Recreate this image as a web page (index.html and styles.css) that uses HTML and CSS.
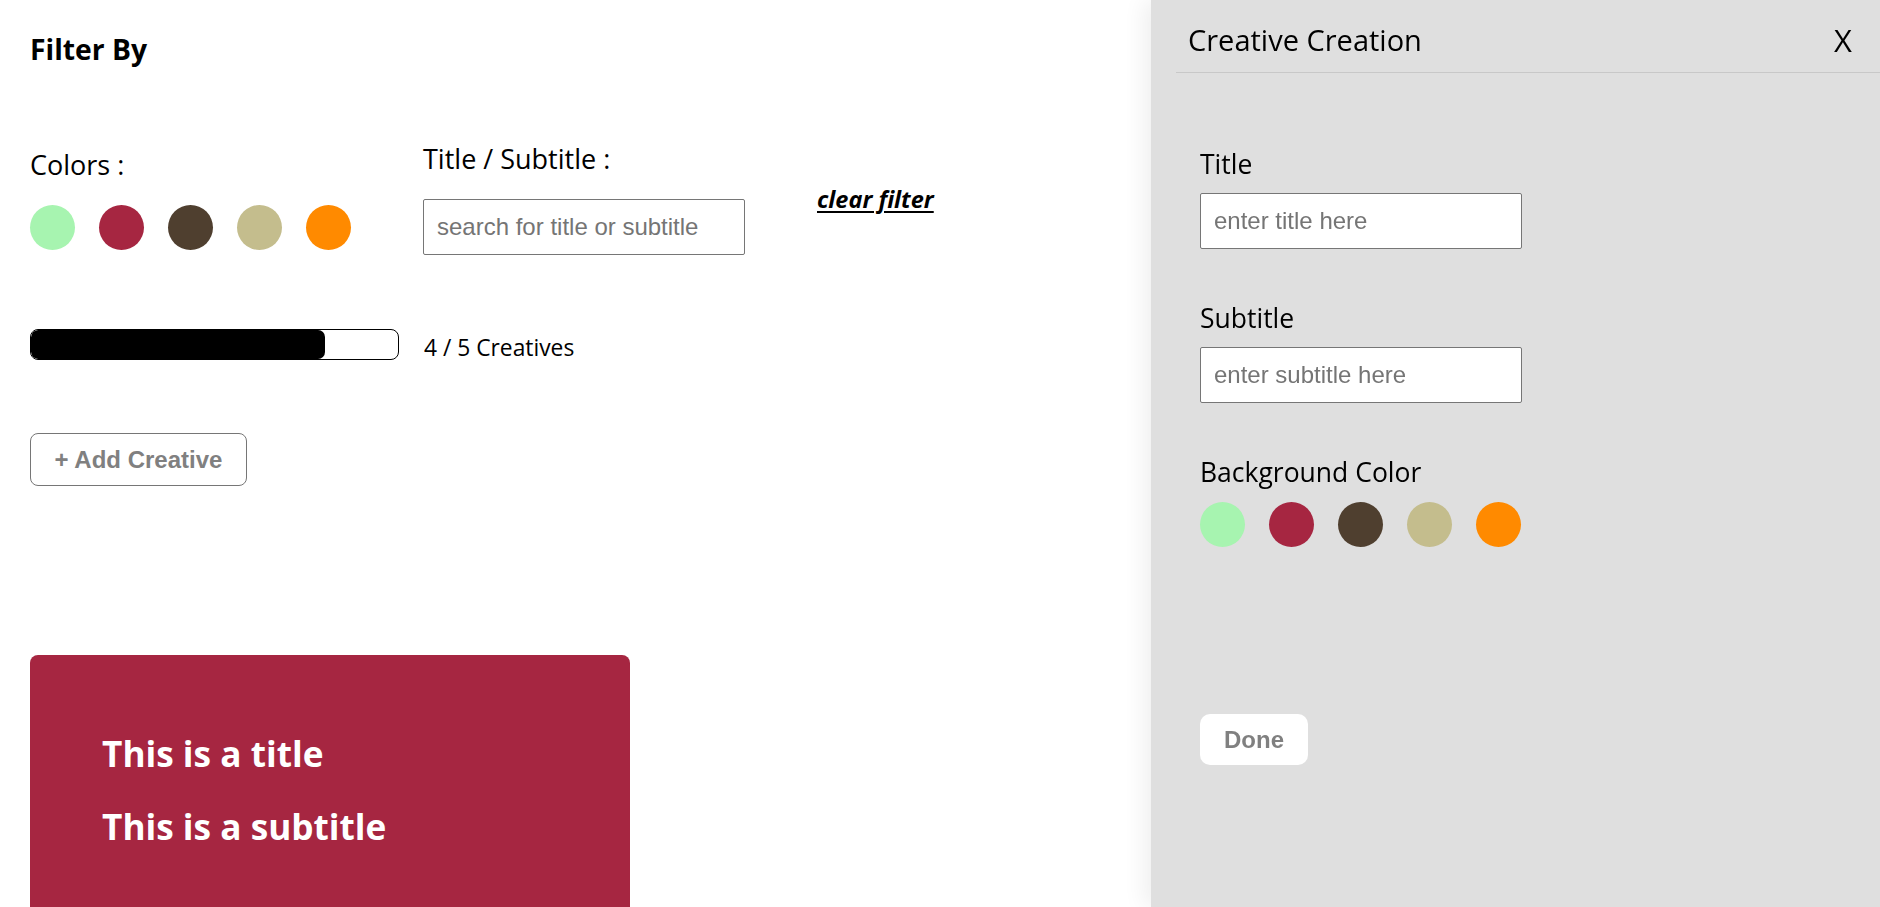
FILE: index.html
```html
<!DOCTYPE html>
<html lang="en">
<head>
<meta charset="utf-8">
<title>Creatives</title>
<link rel="stylesheet" href="styles.css">
</head>
<body>
<main class="page">
  <h2 class="filter-heading">Filter By</h2>
  <div class="filters">
    <div class="filter-colors">
      <div class="label">Colors :</div>
      <div class="swatches">
        <span class="swatch swatch-green"></span>
        <span class="swatch swatch-crimson"></span>
        <span class="swatch swatch-brown"></span>
        <span class="swatch swatch-khaki"></span>
        <span class="swatch swatch-orange"></span>
      </div>
    </div>
    <div class="filter-search">
      <div class="label">Title / Subtitle :</div>
      <input class="text-input search-input" type="text" placeholder="search for title or subtitle">
    </div>
    <a class="clear-filter" href="#">clear filter</a>
  </div>
  <div class="progress-row">
    <div class="progress"><div class="progress-fill" style="width:80%"></div></div>
    <span class="progress-text">4 / 5 Creatives</span>
  </div>
  <button class="add-btn" type="button">+ Add Creative</button>
  <div class="cards">
    <div class="card card-crimson">
      <div class="card-title">This is a title</div>
      <div class="card-subtitle">This is a subtitle</div>
    </div>
  </div>
</main>
<aside class="drawer">
  <div class="drawer-header">
    <span class="drawer-title">Creative Creation</span>
    <span class="drawer-close">X</span>
  </div>
  <div class="drawer-body">
    <div class="field">
      <div class="field-label">Title</div>
      <input class="text-input" type="text" placeholder="enter title here">
    </div>
    <div class="field">
      <div class="field-label">Subtitle</div>
      <input class="text-input" type="text" placeholder="enter subtitle here">
    </div>
    <div class="field field-colors">
      <div class="field-label">Background Color</div>
      <div class="swatches">
        <span class="swatch swatch-green"></span>
        <span class="swatch swatch-crimson"></span>
        <span class="swatch swatch-brown"></span>
        <span class="swatch swatch-khaki"></span>
        <span class="swatch swatch-orange"></span>
      </div>
    </div>
    <button class="done-btn" type="button">Done</button>
  </div>
</aside>
</body>
</html>
```
FILE: styles.css
```css
html, body {
  margin: 0;
  padding: 0;
  height: 100%;
  overflow: hidden;
  background: #ffffff;
  color: #000000;
  font-family: "Open Sans", "Noto Sans", sans-serif;
}

.page {
  padding: 0 0 0 30px;
}

.filter-heading {
  margin: 29px 0 0;
  font-size: 28.3px;
  line-height: 40px;
  font-weight: 700;
}

.filters {
  display: flex;
  align-items: flex-start;
  gap: 72px;
  margin-top: 72px;
}

.label {
  font-size: 27px;
  line-height: 36px;
  font-weight: 400;
}

.filter-colors {
  margin-top: 6px;
}

.swatches {
  display: flex;
  gap: 24px;
  margin-top: 22px;
}

.swatch {
  display: block;
  width: 45px;
  height: 45px;
  border-radius: 50%;
}

.swatch-green { background: #a7f4b0; }
.swatch-crimson { background: #a62641; }
.swatch-brown { background: #4f3f2f; }
.swatch-khaki { background: #c4bd8d; }
.swatch-orange { background: #ff8a00; }

.text-input {
  display: block;
  box-sizing: border-box;
  width: 322px;
  height: 56px;
  margin: 22px 0 0;
  padding: 0 13px;
  border: 1px solid #767676;
  border-radius: 2px;
  background: #ffffff;
  font-family: "Liberation Sans", Arial, sans-serif;
  font-size: 24px;
  color: #000000;
  outline: none;
}

.text-input::placeholder {
  color: #757575;
}

.clear-filter {
  margin-top: 43px;
  font-size: 23.5px;
  line-height: 30px;
  font-weight: 700;
  font-style: italic;
  color: #000000;
  text-decoration: underline;
  text-decoration-thickness: 2px;
  text-underline-offset: 3px;
}

.progress-row {
  display: flex;
  align-items: flex-start;
  gap: 25px;
  margin-top: 74px;
}

.progress {
  box-sizing: border-box;
  width: 369px;
  height: 31px;
  border: 1px solid #000000;
  border-radius: 8px;
  overflow: hidden;
  background: #ffffff;
}

.progress-fill {
  height: 100%;
  background: #000000;
  border-radius: 7px;
}

.progress-text {
  font-size: 22.8px;
  line-height: 31px;
  padding-top: 3px;
}

.add-btn {
  display: block;
  box-sizing: border-box;
  width: 217px;
  height: 53px;
  margin-top: 70px;
  padding: 0;
  border: 1px solid #767676;
  border-radius: 8px;
  background: #ffffff;
  color: #808080;
  font-family: "Liberation Sans", Arial, sans-serif;
  font-size: 24px;
  font-weight: 700;
}

.cards {
  margin-top: 169px;
}

.card {
  box-sizing: border-box;
  width: 600px;
  height: 320px;
  padding: 72px 72px;
  border-radius: 8px;
  color: #ffffff;
  font-weight: 700;
}

.card-crimson {
  background: #a62641;
}

.card-title,
.card-subtitle {
  font-size: 35.2px;
  line-height: 52px;
}

.card-subtitle {
  margin-top: 21px;
}

.drawer {
  position: fixed;
  top: 0;
  right: 0;
  width: 729px;
  height: 100%;
  background: #dfdfdf;
  box-shadow: -6px 0 22px rgba(0, 0, 0, 0.07);
}

.drawer-header {
  display: flex;
  justify-content: space-between;
  align-items: center;
  margin-left: 25px;
  padding: 20px 28px 12px 12px;
  border-bottom: 1px solid #c8c8c8;
}

.drawer-title {
  font-size: 29px;
  line-height: 40px;
}

.drawer-close {
  font-size: 31px;
  line-height: 40px;
}

.drawer-body {
  padding: 73px 0 0 49px;
}

.field + .field {
  margin-top: 51px;
}

.field-colors {
  margin-top: 50px;
}

.field-label {
  font-size: 26.5px;
  line-height: 36px;
}

.field .text-input {
  margin-top: 11px;
}

.field .swatches {
  margin-top: 12px;
}

.done-btn {
  display: block;
  box-sizing: border-box;
  height: 51px;
  margin-top: 167px;
  padding: 0 24px;
  border: none;
  border-radius: 10px;
  background: #ffffff;
  color: #808080;
  font-family: "Liberation Sans", Arial, sans-serif;
  font-size: 24px;
  font-weight: 700;
}
```
